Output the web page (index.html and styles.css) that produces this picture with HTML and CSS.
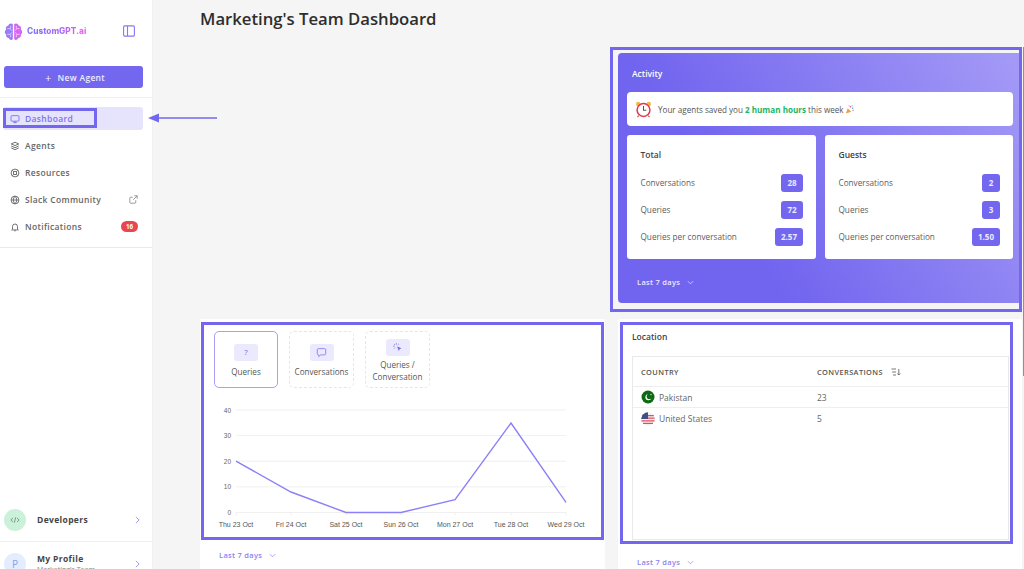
FILE: index.html
```html
<!DOCTYPE html>
<html lang="en">
<head>
<meta charset="utf-8">
<title>Marketing's Team Dashboard</title>
<link rel="stylesheet" href="styles.css">
</head>
<body>
<div class="page">
  <aside class="sidebar">
    <div class="brand">
      <div class="logo">
        <svg class="logo-mark" viewBox="0 0 20 20" width="19" height="19" aria-hidden="true">
          <path d="M9.3 2.2C7.6.9 5 1.6 4.6 3.6 2.4 3.9 1.4 6 2.2 7.8.3 9.2.4 11.9 2.2 13c-.6 2.2 1 4 2.8 3.9.7 2.2 3.3 2.6 4.3 1z" fill="#9a7cf8"/>
          <path d="M10.7 2.2c1.7-1.3 4.3-.6 4.7 1.4 2.2.3 3.2 2.4 2.4 4.2 1.9 1.4 1.8 4.1 0 5.2.6 2.2-1 4-2.8 3.9-.7 2.2-3.3 2.6-4.3 1z" fill="#d865ee"/>
          <path d="M3.5 7h3l1.5 2M3.5 13h3l1.5-2M7 4v3M7 16v-3M16.5 7h-3L12 9M16.5 13h-3L12 11M13 4v3M13 16v-3" fill="none" stroke="#f3e8ff" stroke-width=".7"/>
        </svg>
        <span class="logo-text">CustomGPT.ai</span>
      </div>
      <svg class="panel-icon" viewBox="0 0 12 12" width="12" height="12" aria-hidden="true"><rect x=".6" y=".9" width="10.8" height="10.2" rx="1" fill="none" stroke="#8479f2" stroke-width="1.1"/><path d="M4.5 1v10" stroke="#8479f2" stroke-width="1.1"/></svg>
    </div>
    <div class="new-wrap">
      <button class="new-agent"><span class="plus">+</span>New Agent</button>
    </div>
    <nav class="nav">
      <a class="nav-item active">
        <svg class="nav-icon" viewBox="0 0 12 12" aria-hidden="true"><rect x="1.2" y="2" width="9.6" height="6.6" rx="1"/><path d="M4 10.3h4M6 8.6v1.7M4.5 5.2h.1M7.4 5.2h.1"/></svg>
        <span class="nav-label">Dashboard</span>
      </a>
      <a class="nav-item">
        <svg class="nav-icon" viewBox="0 0 12 12" aria-hidden="true"><path d="M6 1.5l4.5 2L6 5.5l-4.5-2zM1.5 6L6 8l4.5-2M1.5 8.3L6 10.4l4.5-2.1"/></svg>
        <span class="nav-label">Agents</span>
      </a>
      <a class="nav-item">
        <svg class="nav-icon" viewBox="0 0 12 12" aria-hidden="true"><circle cx="6" cy="6" r="4.7"/><circle cx="6" cy="6" r="2"/><path d="M2.7 2.7l1.9 1.9M9.3 2.7L7.4 4.6M2.7 9.3l1.9-1.9M9.3 9.3L7.4 7.4"/></svg>
        <span class="nav-label">Resources</span>
      </a>
      <a class="nav-item">
        <svg class="nav-icon" viewBox="0 0 12 12" aria-hidden="true"><circle cx="6" cy="6" r="4.7"/><path d="M1.3 6h9.4M6 1.3c-2.6 3-2.6 6.4 0 9.4M6 1.3c2.6 3 2.6 6.4 0 9.4" /></svg>
        <span class="nav-label">Slack Community</span>
        <svg class="ext-icon" viewBox="0 0 10 10" aria-hidden="true"><path d="M7.5 5.8v2.4a.9.9 0 0 1-.9.9H1.8a.9.9 0 0 1-.9-.9V3.4c0-.5.4-.9.9-.9h2.4M5.8.9h3.3v3.3M9.1.9L4.6 5.4"/></svg>
      </a>
      <a class="nav-item">
        <svg class="nav-icon" viewBox="0 0 12 12" aria-hidden="true"><path d="M3 8.6V5.4a3 3 0 0 1 6 0v3.2l1 .9H2zM5 10.5h2"/></svg>
        <span class="nav-label">Notifications</span>
        <span class="count">16</span>
      </a>
    </nav>
    <div class="side-bottom">
      <div class="side-row dev-row">
        <span class="avatar avatar-green"><svg viewBox="0 0 12 12" width="10" height="10" aria-hidden="true"><path d="M3.5 3.5L1 6l2.5 2.5M8.5 3.5L11 6 8.5 8.5M6.8 2.8L5.2 9.2" fill="none" stroke="#5f7a68" stroke-width=".9"/></svg></span>
        <span class="side-name">Developers</span>
        <svg class="chev" viewBox="0 0 6 10" aria-hidden="true"><path d="M1 1l4 4-4 4"/></svg>
      </div>
      <div class="side-row profile-row">
        <span class="avatar avatar-blue">P</span>
        <span class="profile-text"><span class="side-name">My Profile</span><span class="side-sub">Marketing's Team</span></span>
        <svg class="chev" viewBox="0 0 6 10" aria-hidden="true"><path d="M1 1l4 4-4 4"/></svg>
      </div>
    </div>
  </aside>

  <main class="main">
    <h1 class="title">Marketing's Team Dashboard</h1>
    <div class="grid">
      <div class="slot-empty"></div>
      <section class="activity">
        <h2 class="activity-title">Activity</h2>
        <div class="banner">
          <svg class="clock" viewBox="0 0 18 18" width="17" height="17" aria-hidden="true">
            <circle cx="3.4" cy="3.2" r="2.3" fill="#f5b83d"/><circle cx="14.6" cy="3.2" r="2.3" fill="#f5b83d"/>
            <path d="M4 15.5l-1.4 1.6M14 15.5l1.4 1.6" stroke="#c9505c" stroke-width="1.2"/>
            <circle cx="9" cy="9.5" r="6.8" fill="#fff" stroke="#dd3b4c" stroke-width="1.6"/>
            <path d="M9 5.2v4.5h3" fill="none" stroke="#555" stroke-width="1.1"/>
          </svg>
          <span class="banner-text">Your agents saved you <b class="green">2 human hours</b> this week</span>
          <svg class="popper" viewBox="0 0 10 10" width="9" height="9" aria-hidden="true">
            <path d="M1 9.5l2-6 4 4z" fill="#e8a33d"/><circle cx="6" cy="2" r=".9" fill="#d64f9b"/><circle cx="8.6" cy="3.6" r=".8" fill="#4f9bd6"/><circle cx="8" cy="1" r=".6" fill="#5fbf6a"/><circle cx="4.4" cy=".9" r=".5" fill="#7367f0"/><circle cx="9" cy="6" r=".6" fill="#d64f5c"/>
          </svg>
        </div>
        <div class="stat-cards">
          <div class="stat-card">
            <h3 class="stat-title">Total</h3>
            <div class="stat-row"><span>Conversations</span><span class="badge">28</span></div>
            <div class="stat-row"><span>Queries</span><span class="badge">72</span></div>
            <div class="stat-row"><span>Queries per conversation</span><span class="badge wide">2.57</span></div>
          </div>
          <div class="stat-card">
            <h3 class="stat-title">Guests</h3>
            <div class="stat-row"><span>Conversations</span><span class="badge narrow">2</span></div>
            <div class="stat-row"><span>Queries</span><span class="badge narrow">3</span></div>
            <div class="stat-row"><span>Queries per conversation</span><span class="badge wide">1.50</span></div>
          </div>
        </div>
        <div class="range range-light">Last 7 days<svg class="range-chev" viewBox="0 0 8 5" aria-hidden="true"><path d="M1 1l3 3 3-3"/></svg></div>
      </section>

      <section class="card chart-card">
        <div class="tabs">
          <div class="tab tab-q selected"><span class="tab-icon qmark">?</span><span>Queries</span></div>
          <div class="tab tab-c"><span class="tab-icon"><svg viewBox="0 0 12 12" width="11" height="11" aria-hidden="true"><path d="M2.6 1.8h6.8c.7 0 1.2.5 1.2 1.2v4.4c0 .7-.5 1.2-1.2 1.2H5.2L3 10.4V8.6h-.4c-.7 0-1.2-.5-1.2-1.2V3c0-.7.5-1.2 1.2-1.2z" fill="none" stroke="#7367f0" stroke-width=".8"/></svg></span><span>Conversations</span></div>
          <div class="tab tab-qc"><span class="tab-icon"><svg viewBox="0 0 12 12" width="11" height="11" aria-hidden="true"><path d="M5.5 5l5 1.8-2.1.9-.9 2.1z" fill="#7367f0"/><path d="M4.8 1.2v1.6M1.3 4.6h1.6M2.2 2.1l1.1 1.1M7.4 2.1L6.3 3.2M2.2 7.2l1.1-1.1" stroke="#7367f0" stroke-width=".8"/></svg></span><span class="tab-two">Queries / Conversation</span></div>
        </div>
        <svg class="chart" viewBox="0 0 380 136" width="380" height="136" role="img" aria-label="Queries per day">
          <g class="grid-lines">
            <path d="M22 7H352M22 32.6H352M22 58.2H352M22 83.8H352M22 109.5H352"/>
            <path d="M22 109.5v3M77 109.5v3M132 109.5v3M187 109.5v3M241 109.5v3M297 109.5v3M352 109.5v3"/>
          </g>
          <g class="y-labels">
            <text x="17" y="9.5">40</text><text x="17" y="35">30</text><text x="17" y="60.7">20</text><text x="17" y="86.3">10</text><text x="17" y="112">0</text>
          </g>
          <g class="x-labels">
            <text x="22" y="123.5">Thu 23 Oct</text><text x="77" y="123.5">Fri 24 Oct</text><text x="132" y="123.5">Sat 25 Oct</text><text x="187" y="123.5">Sun 26 Oct</text><text x="241" y="123.5">Mon 27 Oct</text><text x="297" y="123.5">Tue 28 Oct</text><text x="352" y="123.5">Wed 29 Oct</text>
          </g>
          <polyline class="line" points="22,58.2 77,89 132,109.5 187,109.5 241,96.7 297,20 352,99.3"/>
        </svg>
        <div class="range range-accent">Last 7 days<svg class="range-chev" viewBox="0 0 8 5" aria-hidden="true"><path d="M1 1l3 3 3-3"/></svg></div>
      </section>

      <section class="card location-card">
        <h2 class="loc-title">Location</h2>
        <div class="table">
          <div class="t-row t-head">
            <span class="t-country">COUNTRY</span>
            <span class="t-conv">CONVERSATIONS
              <svg class="sort-icon" viewBox="0 0 10 8" aria-hidden="true"><path d="M.5 1h4.5M1.2 4h3.8M2 7h3M7.8 1v6M6.3 5.5l1.5 1.5 1.5-1.5"/></svg>
            </span>
          </div>
          <div class="t-row t-body">
            <span class="t-country">
              <svg class="flag" viewBox="0 0 14 14" aria-hidden="true"><circle cx="7" cy="7" r="6.5" fill="#0c6a12"/><circle cx="7.4" cy="7.2" r="3" fill="#fff"/><circle cx="8.4" cy="6.4" r="2.7" fill="#0c6a12"/><circle cx="10" cy="4.6" r=".7" fill="#fff"/></svg>
              Pakistan
            </span>
            <span class="t-conv">23</span>
          </div>
          <div class="t-row t-body t-last">
            <span class="t-country">
              <svg class="flag" viewBox="0 0 14 14" aria-hidden="true"><circle cx="7" cy="7" r="6.7" fill="#f4f0f2"/><path d="M1.2 3.6h11.6M.4 6.2h13.2M.4 8.8h13.2M2 11.4h10" stroke="#d9535f" stroke-width="1.2"/><path d="M7 .3A6.7 6.7 0 0 0 .3 7H7z" fill="#3f4f87"/></svg>
              United States
            </span>
            <span class="t-conv">5</span>
          </div>
        </div>
        <div class="range range-accent">Last 7 days<svg class="range-chev" viewBox="0 0 8 5" aria-hidden="true"><path d="M1 1l3 3 3-3"/></svg></div>
      </section>
    </div>
  </main>

  <div class="mark mark-dash"></div>
  <div class="mark mark-activity"></div>
  <div class="mark mark-chart"></div>
  <div class="mark mark-location"></div>
  <div class="edge-line"></div>
  <svg class="mark-arrow" viewBox="0 0 70 10" width="70" height="10" aria-hidden="true"><path d="M69 5H7" stroke="#7367f0" stroke-width="1.6"/><path d="M0 5l11-4.5v9z" fill="#7367f0"/></svg>
</div>
</body>
</html>
```

FILE: styles.css
```css
* { box-sizing: border-box; }
html, body { margin: 0; padding: 0; }
body { font-family: "Open Sans", "Liberation Sans", sans-serif; color: #555; background: #f5f5f5; }
.page { position: relative; display: flex; width: 1024px; height: 569px; overflow: hidden; }

/* Sidebar */
.sidebar { width: 153px; flex: none; background: #fff; display: flex; flex-direction: column; height: 569px; overflow: hidden; border-right: 1px solid #f0f0f0; }
.brand { height: 62px; flex: none; display: flex; align-items: center; justify-content: space-between; padding: 0 17px 0 4px; }
.logo { display: flex; align-items: center; gap: 4px; }
.logo-text { font-family: "Inter", "Liberation Sans", sans-serif; font-size: 8.3px; font-weight: 800; background: linear-gradient(90deg, #7c74f5 0%, #a768f2 60%, #f45cf0 100%); -webkit-background-clip: text; background-clip: text; color: transparent; }
.panel-icon { display: block; }
.new-wrap { padding: 4px 9px 10px 4px; border-bottom: 1px solid #eee; height: 36px; flex: none; }
.new-agent { width: 139px; height: 22px; border: 0; border-radius: 3px; background: #7367f0; color: #f0eeff; font: 600 8.5px "Open Sans", sans-serif; letter-spacing: .3px; display: flex; align-items: center; justify-content: center; padding: 0 0 0 3px; }
.plus { font-size: 11px; font-weight: 400; margin-right: 6px; line-height: 1; }
.nav { display: flex; flex-direction: column; gap: 4px; padding: 9px 9px 9px 3px; border-bottom: 1px solid #e9e9e9; flex: none; }
.nav-item { height: 23px; display: flex; align-items: center; padding: 0 5px 0 7px; border-radius: 3px; font-size: 8.5px; font-weight: 600; letter-spacing: .33px; color: #666; }
.nav-item.active { background: #e6e3fc; color: #7d72ee; }
.nav-icon { width: 10px; height: 10px; margin-right: 5px; fill: none; stroke: currentColor; stroke-width: 1.1; flex: none; }
.nav-label { flex: 1; }
.ext-icon { width: 9px; height: 9px; fill: none; stroke: #777; stroke-width: .8; }
.count { width: 17px; height: 11px; border-radius: 6px; background: #e9464f; color: #fff; font-size: 6.2px; font-weight: 700; display: flex; align-items: center; justify-content: center; letter-spacing: 0; }
.side-bottom { margin-top: 250px; flex: none; }
.side-row { display: flex; align-items: center; padding: 0 12px 0 4px; }
.dev-row { height: 44px; border-bottom: 1px solid #eee; }
.profile-row { height: 44px; }
.avatar { width: 22px; height: 22px; flex: none; border-radius: 50%; display: flex; align-items: center; justify-content: center; font-size: 10px; margin-right: 11px; }
.avatar-green { background: #ccf1da; }
.avatar-blue { background: #e3edfd; color: #8aa0ea; }
.side-name { display: block; flex: 1; font-size: 8.5px; line-height: 12px; font-weight: 700; letter-spacing: .35px; color: #444; }
.profile-text { flex: 1; display: block; }
.side-sub { display: block; font-size: 7px; color: #888; line-height: 10px; }
.chev { width: 5px; height: 8px; fill: none; stroke: #9c93f3; stroke-width: 1.2; flex: none; }

/* Main */
.main { flex: 1; padding: 0 2px 0 47px; min-width: 0; }
.title { margin: 0; height: 53px; padding-top: 6px; font-size: 16.7px; line-height: 26px; font-weight: 600; color: #2e2e2e; }
.grid { display: grid; grid-template-columns: 405px 404px; grid-template-rows: 250px 260px; gap: 16px 13px; }

/* Activity */
.activity { border-radius: 4px; padding: 14px 9px 0; background: linear-gradient(58deg, #7164ef 30%, #a59bf6 100%); position: relative; }
.activity-title { margin: 0 0 0 5px; font-size: 8.5px; line-height: 14px; font-weight: 600; color: #fff; }
.banner { margin-top: 11px; height: 34px; background: #fff; border-radius: 4px; display: flex; align-items: center; padding: 0 8px; }
.clock { margin-right: 6px; flex: none; }
.banner-text { font-size: 8.1px; color: #555; }
.green { color: #22b465; font-weight: 700; }
.popper { margin-left: 1px; }
.stat-cards { display: grid; grid-template-columns: 189px 188px; gap: 9px; margin-top: 9px; }
.stat-card { height: 124px; background: #fff; border-radius: 3px; padding: 14px 13px 0 13.5px; }
.stat-title { margin: 0 0 8px; font-size: 8.5px; line-height: 12px; font-weight: 600; color: #444; }
.stat-row { height: 27px; display: flex; align-items: center; justify-content: space-between; font-size: 8.2px; color: #5c5c5c; }
.badge { min-width: 22px; height: 18px; padding: 0 4px; border-radius: 3px; background: #7367f0; color: #eeeaff; font-size: 8px; font-weight: 700; display: flex; align-items: center; justify-content: center; }
.badge.narrow { min-width: 18px; }
.badge.wide { min-width: 28px; }

.range { display: flex; align-items: center; font-size: 7.5px; font-weight: 600; letter-spacing: .3px; }
.range-light { color: #efeaff; margin: 18px 0 0 10px; }
.range-accent { color: #8d82f3; }
.range-chev { width: 7px; height: 5px; margin-left: 7px; fill: none; stroke: currentColor; stroke-width: .8; }

/* Cards */
.card { background: #fff; border-radius: 2px; position: relative; }
.chart-card { padding: 12px 14px 0; }
.tabs { display: flex; gap: 11px; height: 57px; }
.tab { height: 57px; padding-top: 2px; border: 1px dashed #e6e6e6; border-radius: 5px; display: flex; flex-direction: column; align-items: center; justify-content: center; font-size: 8.1px; line-height: 12px; text-align: center; color: #555; }
.tab.selected { border: 1px solid #a99ff6; }
.tab-q { width: 64px; }
.tab-c { width: 65px; }
.tab-qc { width: 65px; }
.tab-icon { width: 24px; height: 17px; border-radius: 3px; background: #ebe9fd; color: #7367f0; display: flex; align-items: center; justify-content: center; margin-bottom: 5px; flex: none; font-size: 8px; }
.tab-two { width: 60px; }
.tab-qc .tab-icon { margin-bottom: 3px; }
.chart { display: block; margin-top: 15px; overflow: visible; }
.grid-lines path { stroke: #ececec; stroke-width: .8; fill: none; }
.y-labels text { font: 6.5px "Liberation Sans", sans-serif; fill: #666; text-anchor: end; }
.x-labels text { font: 7px "Liberation Sans", sans-serif; fill: #555; text-anchor: middle; }
.line { fill: none; stroke: #8b80f7; stroke-width: 1.4; }
.chart-card .range-accent { margin: 11px 0 0 5px; }

/* Location */
.location-card { padding: 11px 13px 0 14px; }
.loc-title { margin: 0; font-size: 8.5px; line-height: 13px; font-weight: 600; color: #444; }
.table { margin-top: 13px; height: 184px; border: 1px solid #e9e9e9; }
.t-row { display: flex; align-items: center; border-bottom: 1px solid #eee; font-size: 8.5px; color: #666; }
.t-head { height: 30px; font-size: 7.4px; font-weight: 600; letter-spacing: .4px; color: #555; }
.t-body { height: 21px; }
.t-last { border-bottom: 0; }
.t-country { width: 184px; padding-left: 8px; display: flex; align-items: center; }
.t-body .t-country { font-weight: 500; }
.t-conv { display: flex; align-items: center; }
.flag { width: 14px; height: 14px; margin-right: 4px; flex: none; }
.sort-icon { width: 10px; height: 8px; margin-left: 8px; fill: none; stroke: #555; stroke-width: .8; }
.location-card .range-accent { margin: 17px 0 0 5px; }

/* Annotation overlay */
.mark { position: absolute; border: 3px solid #7367f0; pointer-events: none; }
.mark-dash { left: 3px; top: 108px; width: 94px; height: 20px; }
.mark-activity { left: 610px; top: 47px; width: 412px; height: 265px; }
.mark-chart { left: 201px; top: 322px; width: 403px; height: 218px; }
.mark-location { left: 620px; top: 322px; width: 393px; height: 222px; }
.edge-line { position: absolute; left: 1023px; top: 47px; width: 1px; height: 329px; background: #8a7ff5; }
.mark-arrow { position: absolute; left: 148px; top: 113px; }
```
